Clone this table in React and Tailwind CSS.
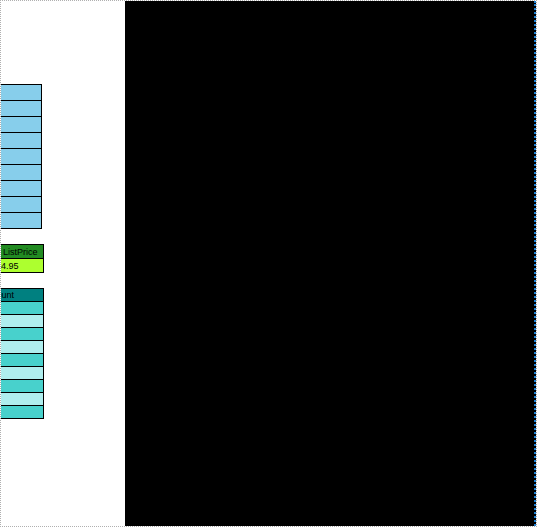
import React from "react";

const blueRows = Array.from({ length: 9 });
const tealRows = Array.from({ length: 9 });

function App() {
  return (
    <div
      className="w-[537px] h-[527px] border border-dotted border-[#b0b0b0] bg-white flex overflow-hidden"
      style={{ fontFamily: '"Liberation Sans", Arial, sans-serif' }}
    >
      <div className="w-[124px] shrink-0 overflow-hidden">
        {/* sky blue table */}
        <div className="mt-[83px] ml-[-61px] w-[102px] border-t border-l border-r border-black">
          {blueRows.map((_, i) => (
            <div key={i} className="h-[16px] bg-[#87ceeb] border-b border-black" />
          ))}
        </div>

        {/* list price table */}
        <div className="mt-[15px] ml-[-61px] w-[104px] border-t border-l border-r border-black text-[9px] leading-[14px] text-black">
          <div className="h-[14px] bg-[#228b22] border-b border-black flex justify-end">
            <div className="w-[41px] pl-[1px] whitespace-nowrap">ListPrice</div>
          </div>
          <div className="h-[14px] bg-[#adff2f] border-b border-black flex justify-end">
            <div className="w-[47px] whitespace-nowrap">$4.95</div>
          </div>
        </div>

        {/* turquoise table */}
        <div className="mt-[15px] ml-[-61px] w-[104px] border-t border-l border-r border-black text-[9px] leading-[13px] text-black">
          <div className="h-[13px] bg-[#008080] border-b border-black flex justify-end">
            <div className="w-[60px] whitespace-nowrap">Amount</div>
          </div>
          {tealRows.map((_, i) => (
            <div
              key={i}
              className={
                i % 2 === 0
                  ? "h-[13px] bg-[#48d1cc] border-b border-black"
                  : "h-[13px] bg-[#afeeee] border-b border-black"
              }
            />
          ))}
        </div>
      </div>
      <div className="flex-1 bg-black border-r-2 border-dotted border-[#1e7fd0]" />
    </div>
  );
}

export default App;
